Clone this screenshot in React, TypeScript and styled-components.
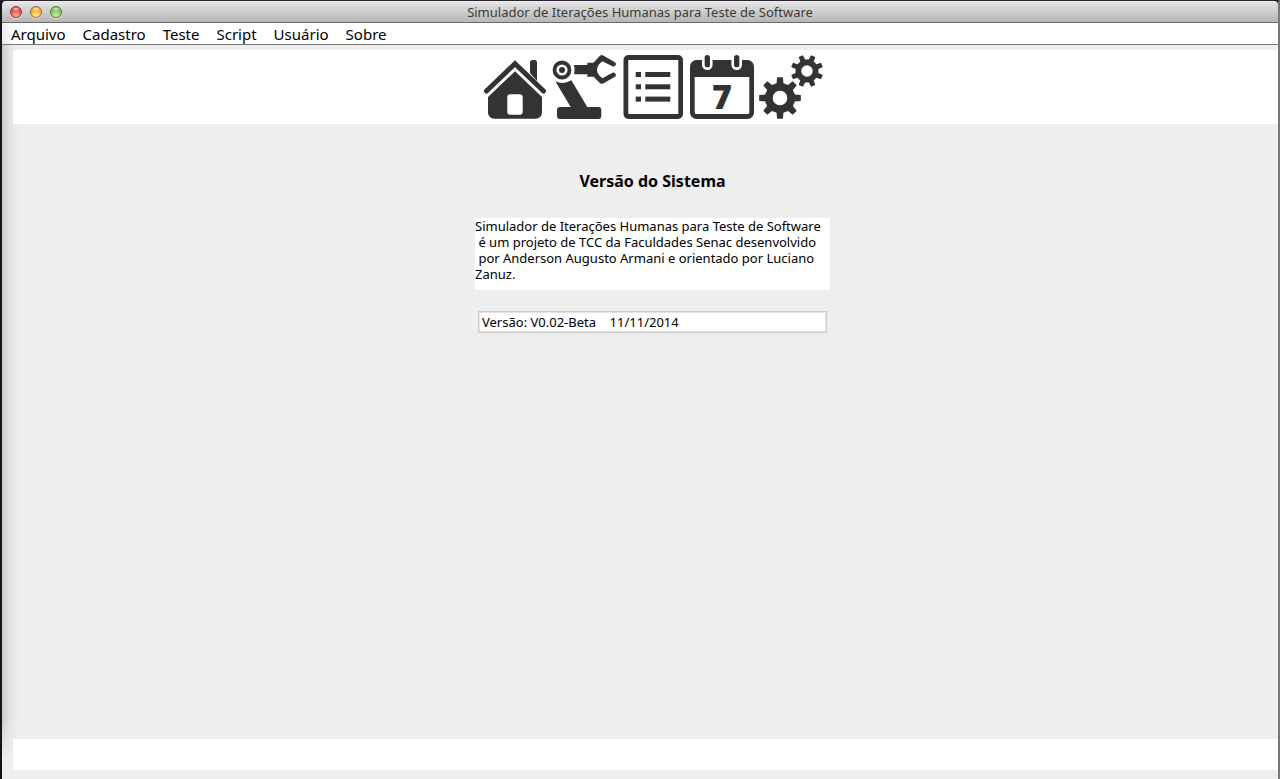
import React from "react";
import styled, { createGlobalStyle } from "styled-components";

const GlobalStyle = createGlobalStyle`
  * { box-sizing: border-box; }
  html, body { height: 100%; margin: 0; }
  #root { height: 100%; }
  body {
    background: #1c1b20;
    color: #000;
    font-family: "Noto Sans", "Open Sans", sans-serif;
  }
  button, input, textarea { font-family: inherit; color: inherit; }
`;

const Window = styled.div`
  display: flex;
  flex-direction: column;
  min-height: 100%;
  border: solid;
  border-width: 1px 2px 0;
  border-color: #26242c #777 #26242c #141417;
  background: #1c1b20;
`;

const TitleBar = styled.header`
  display: grid;
  grid-template-columns: 1fr auto 1fr;
  align-items: center;
  height: 22px;
  padding: 0 8px;
  border-bottom: 1px solid #6c6c6c;
  border-radius: 4px 4px 0 0;
  background: linear-gradient(#f0e9ee, #dcdcdc 20%, #b6b6b6);
`;

const Lights = styled.div`
  display: flex;
  gap: 8px;
`;

const Light = styled.button<{ $edge: string; $fill: string; $glow: string }>`
  width: 12px;
  height: 12px;
  padding: 0;
  border: 1px solid ${(p) => p.$edge};
  border-radius: 50%;
  background:
    radial-gradient(ellipse 4px 2px at 50% 20%, #fffc, #fff0),
    radial-gradient(circle at 50% 90%, ${(p) => p.$glow}, ${(p) => p.$fill} 70%);
  box-shadow: 0 1px 0 #ffffff80;
`;

const Title = styled.h1`
  margin: 0;
  font-size: 13px;
  line-height: 20px;
  font-weight: 400;
  color: #3a3a3a;
`;

const MenuBar = styled.nav`
  display: flex;
  gap: 17px;
  height: 22px;
  padding: 0 9px;
  border-bottom: 1px solid #777;
  background: linear-gradient(90deg, #ececec, #fff 14px);
`;

const MenuItem = styled.button`
  padding: 0;
  border: 0;
  background: none;
  font-size: 15px;
  line-height: 20px;
`;

const Body = styled.div`
  display: flex;
  flex: 1;
  flex-direction: column;
  padding: 5px 0 9px 11px;
  background:
    linear-gradient(#eee0 calc(100% - 60px), #eee calc(100% - 20px)),
    linear-gradient(90deg, #cbc9ca, #e2e2e2 7px, #eee 17px);
`;

const ToolBar = styled.div`
  display: flex;
  justify-content: center;
  gap: 5px;
  padding: 5px 0 5px 15px;
  background: #fff;
`;

const Tool = styled.button`
  width: 64px;
  height: 64px;
  padding: 0;
  border: 0;
  background: none;
  color: #333;

  svg { display: block; }
`;

const Main = styled.main`
  display: flex;
  flex: 1;
  flex-direction: column;
  align-items: center;
  padding: 46px 0 24px 14px;
`;

const Heading = styled.h2`
  margin: 0 0 25px;
  font-size: 16px;
  line-height: 23px;
  font-weight: 700;
`;

const About = styled.textarea`
  display: block;
  width: 355px;
  height: 72px;
  padding: 0;
  border: 0;
  outline: 0;
  resize: none;
  overflow: hidden;
  white-space: pre;
  background: #fff;
  font-size: 13px;
  line-height: 16px;
`;

const Version = styled.input`
  width: 349px;
  height: 22px;
  margin-top: 21px;
  padding: 0 3px;
  border: 1px solid #cdcdcd;
  outline: 0;
  background: #fff;
  box-shadow: inset 0 0 0 1px #e4e4e4;
  font-size: 13px;
`;

const StatusBar = styled.footer`
  height: 31px;
  background: #fff;
`;

function gear(cx: number, cy: number, tip: number, root: number, hole: number, turn: number) {
  const points: string[] = [];
  for (let i = 0; i < 8; i++) {
    const a = turn + i * 45;
    const corners: [number, number][] = [[-13, root], [-8, tip], [8, tip], [13, root]];
    corners.forEach(([d, r]) => {
      const t = ((a + d) * Math.PI) / 180;
      points.push(`${(cx + r * Math.cos(t)).toFixed(2)} ${(cy + r * Math.sin(t)).toFixed(2)}`);
    });
  }
  return `M${points.join("L")}ZM${cx - hole} ${cy}a${hole} ${hole} 0 1 0 ${2 * hole} 0a${hole} ${hole} 0 1 0 ${-2 * hole} 0Z`;
}

const HouseIcon = () => (
  <>
    <path d="M47 18V7.500a2.500 2.500 0 0 1 2.500-2.500h2a2.500 2.500 0 0 1 2.500 2.500V26Z" />
    <path d="M3.500 36 32 8.700 60.500 36" fill="none" stroke="currentColor" strokeWidth="5" strokeLinecap="round" />
    <path fillRule="evenodd" d="M32 16.300 59 42V57.500a6.200 6.200 0 0 1-6.200 6.200H11.200A6.200 6.200 0 0 1 5 57.500V42ZM27.300 39.300a3 3 0 0 0-3 3V56.700a3 3 0 0 0 3 3h9.400a3 3 0 0 0 3-3V42.300a3 3 0 0 0-3-3Z" />
  </>
);

const RobotIcon = () => (
  <>
    <circle cx="10" cy="15" r="7.500" fill="none" stroke="currentColor" strokeWidth="3.800" />
    <circle cx="10" cy="15" r="3" />
    <path d="M22 10H35.300V7.700H41.500L48.200.6Q49.500-.5 51.200.6L63 7.300Q64.400 8.600 63.600 10.300Q62.500 12 60.500 11.300L50.400 6.200Q45 10 45 14.700Q45 19.500 50.400 23.300L60.500 17.700Q62.500 17.200 63.600 19Q64.300 20.800 63 21.800L51.200 28.400Q49.500 29.300 48.200 28.200L41.500 21.700H35.300V19.300H22Q23 14.700 22 10Z" />
    <path d="M3.300 26.300Q11.500 30 19.300 25.300L35.300 52H46.300a3 3 0 0 1 3 3v6a3 3 0 0 1-3 3H8a3 3 0 0 1-3-3V55a3 3 0 0 1 3-3H18.700Z" />
  </>
);

const ListIcon = () => (
  <>
    <path fillRule="evenodd" d="M7.500 0H57a5 5 0 0 1 5 5V59a5 5 0 0 1-5 5H7.500a5 5 0 0 1-5-5V5a5 5 0 0 1 5-5ZM7.300 5V59H57.300V5Z" />
    {[17, 29.3, 41.6].map((y) => (
      <React.Fragment key={y}>
        <rect x="14.700" y={y} width="5.300" height="5" />
        <rect x="24.300" y={y} width="25" height="5" />
      </React.Fragment>
    ))}
  </>
);

const SevenText = styled.text`
  font: 800 34px "Open Sans", sans-serif;
`;

const CalendarIcon = () => (
  <>
    <path fillRule="evenodd" d="M6.500 5H57.500A6.500 6.500 0 0 1 64 11.500V57.500A6.500 6.500 0 0 1 57.500 64H6.500A6.500 6.500 0 0 1 0 57.500V11.500A6.500 6.500 0 0 1 6.500 5ZM4.700 22V57.500A1.500 1.500 0 0 0 6.200 59H57.800A1.500 1.500 0 0 0 59.300 57.500V22Z" />
    {[17.3, 46.7].map((x) => (
      <g key={x} strokeLinecap="round">
        <path d={`M${x} 2.700V9.700`} stroke="#fff" strokeWidth="10.600" />
        <path d={`M${x} 2.700V9.700`} stroke="currentColor" strokeWidth="5.300" />
      </g>
    ))}
    <SevenText x="32" y="54" textAnchor="middle">7</SevenText>
  </>
);

const GearsIcon = () => (
  <>
    <path fillRule="evenodd" d={gear(21, 43, 21, 15.2, 7.3, 0)} />
    <path fillRule="evenodd" d={gear(48, 16, 16.3, 11.6, 5.7, 22.5)} />
  </>
);

const tools = [
  { label: "Início", Icon: HouseIcon },
  { label: "Robô", Icon: RobotIcon },
  { label: "Lista", Icon: ListIcon },
  { label: "Agenda", Icon: CalendarIcon },
  { label: "Configurações", Icon: GearsIcon },
];

const menus = ["Arquivo", "Cadastro", "Teste", "Script", "Usuário", "Sobre"];

const aboutText = [
  "Simulador de Iterações Humanas para Teste de Software",
  " é um projeto de TCC da Faculdades Senac desenvolvido",
  " por Anderson Augusto Armani e orientado por Luciano",
  "Zanuz.",
].join("\n");

export default function App() {
  return (
    <>
      <GlobalStyle />
      <Window>
        <TitleBar>
          <Lights>
            <Light aria-label="Fechar" $edge="#9a3434" $fill="#e2443f" $glow="#ffaca5" />
            <Light aria-label="Minimizar" $edge="#a06a28" $fill="#efa236" $glow="#fff08c" />
            <Light aria-label="Ampliar" $edge="#4c8038" $fill="#74b957" $glow="#d5f7a8" />
          </Lights>
          <Title>Simulador de Iterações Humanas para Teste de Software</Title>
        </TitleBar>
        <MenuBar>
          {menus.map((name) => (
            <MenuItem key={name}>{name}</MenuItem>
          ))}
        </MenuBar>
        <Body>
          <ToolBar role="toolbar">
            {tools.map(({ label, Icon }) => (
              <Tool key={label} aria-label={label}>
                <svg width="64" height="64" viewBox="0 0 64 64" fill="currentColor" aria-hidden="true">
                  <Icon />
                </svg>
              </Tool>
            ))}
          </ToolBar>
          <Main>
            <Heading id="versao">Versão do Sistema</Heading>
            <About aria-labelledby="versao" readOnly value={aboutText} />
            <Version aria-label="Versão" readOnly value="Versão: V0.02-Beta    11/11/2014" />
          </Main>
          <StatusBar />
        </Body>
      </Window>
    </>
  );
}
